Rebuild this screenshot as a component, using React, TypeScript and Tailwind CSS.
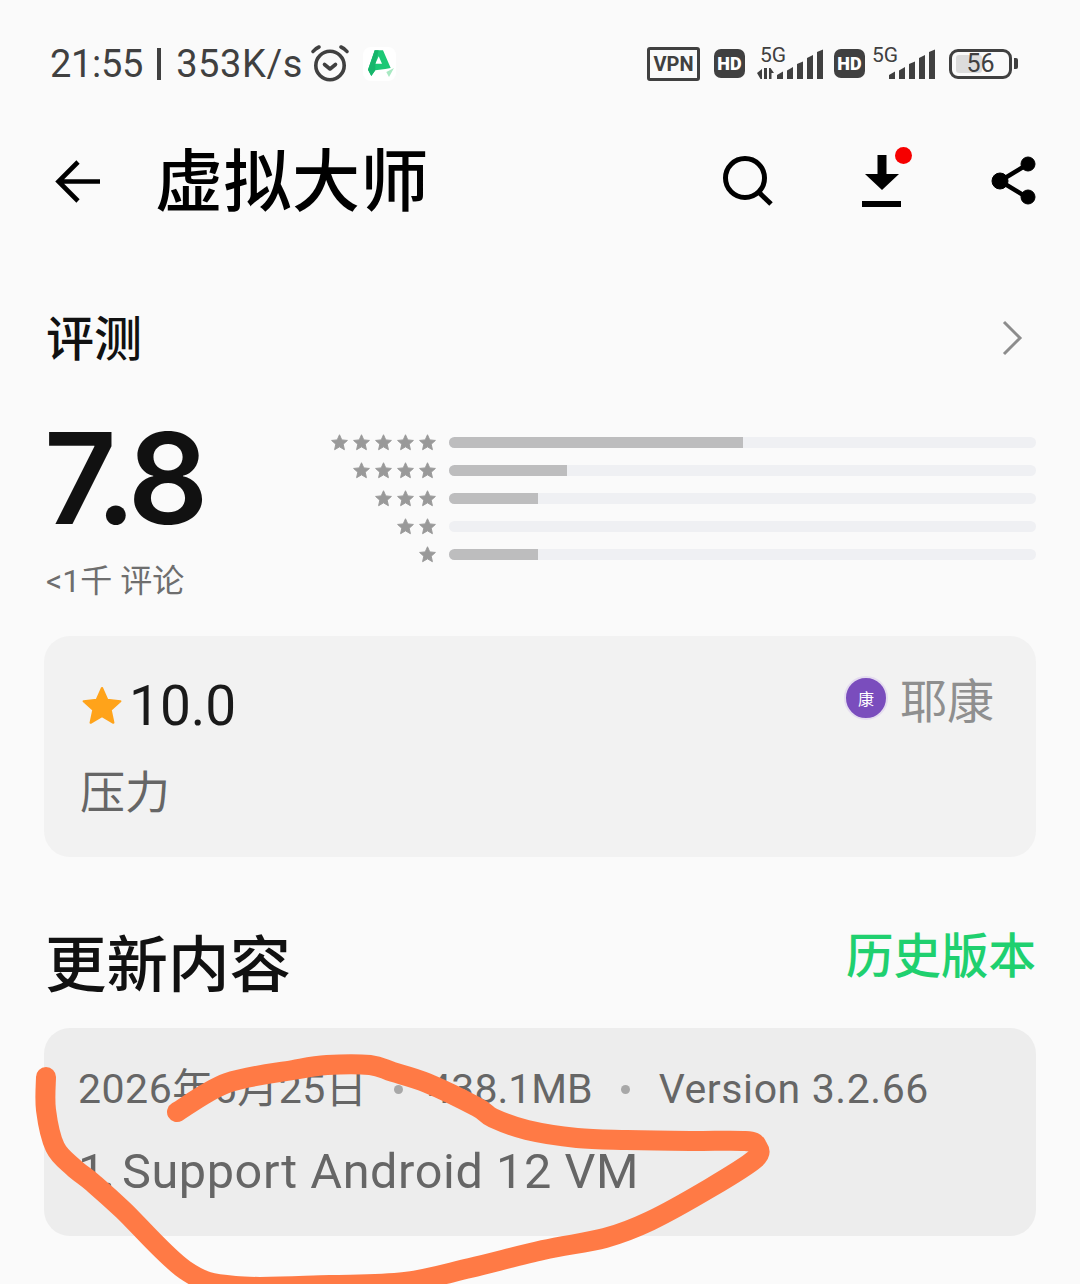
import React from 'react';

const CJK = '"Noto Sans CJK SC", sans-serif';
const LATIN_CJK = 'Roboto, "Noto Sans CJK SC", sans-serif';

const bars = [
  { stars: 5, fill: 294 },
  { stars: 4, fill: 118 },
  { stars: 3, fill: 89 },
  { stars: 2, fill: 0 },
  { stars: 1, fill: 89 },
];

// centre line of the hand-drawn stroke
const scribblePoints = [
  [177, 1112], [227, 1083], [293, 1070], [327, 1065], [370, 1065], [393, 1072], [427, 1083], [477, 1107],
  [493, 1118], [527, 1130], [577, 1138], [627, 1140], [690, 1141], [745, 1141], [757, 1146], [755, 1159], [710, 1188],
  [650, 1221], [605, 1238], [543, 1250], [470, 1268], [405, 1282], [330, 1285], [235, 1286], [185, 1270],
  [123, 1210], [93, 1183], [73, 1167], [55, 1147], [46, 1110], [46, 1077],
];

const smoothPath = (pts: number[][]) => {
  let d = `M${pts[0][0]} ${pts[0][1]}`;
  for (let i = 0; i < pts.length - 1; i++) {
    const p0 = pts[Math.max(i - 1, 0)];
    const p1 = pts[i];
    const p2 = pts[i + 1];
    const p3 = pts[Math.min(i + 2, pts.length - 1)];
    const c1x = p1[0] + (p2[0] - p0[0]) / 6;
    const c1y = p1[1] + (p2[1] - p0[1]) / 6;
    const c2x = p2[0] - (p3[0] - p1[0]) / 6;
    const c2y = p2[1] - (p3[1] - p1[1]) / 6;
    d += `C${c1x} ${c1y} ${c2x} ${c2y} ${p2[0]} ${p2[1]}`;
  }
  return d;
};

const Star: React.FC<{ size: number; color: string }> = ({ size, color }) => (
  <svg width={size} height={size} viewBox="0 0 24 24" className="shrink-0">
    <path
      fill={color}
      stroke={color}
      strokeWidth="1.2"
      strokeLinejoin="round"
      d="M12 2.2l2.9 6.5 7.1.7-5.3 4.7 1.5 7-6.2-3.6-6.2 3.6 1.5-7L2 9.4l7.1-.7z"
    />
  </svg>
);

const AlarmIcon = () => (
  <svg width="40" height="40" viewBox="0 0 40 40" fill="none" stroke="#404040" strokeWidth="3.6" strokeLinecap="round" strokeLinejoin="round">
    <circle cx="20" cy="21.5" r="14.2" />
    <path d="M14.5 20.5l5.5 4.5 5.5-4.5" />
    <path d="M3 7.5c1.5-2 3.5-3.5 6-4.5M37 7.5c-1.5-2-3.5-3.5-6-4.5" />
  </svg>
);

const ApkIcon = () => (
  <div className="ml-[13px] h-[34px] w-[33px] rounded-[8px] bg-white">
    <svg width="33" height="34" viewBox="0 0 33 34">
      <path fillRule="evenodd" d="M11.7 3.3H20L27.7 21l-5.4 1-10 1.3L8.3 29 5 22.7zM15.7 9.3L19 16.7h-6.7z" fill="#1cc875" />
      <path d="M11.7 3.3h4l-3.4 13.4 0 6.6-4 5.7L5 22.7z" fill="#17b56b" />
      <path d="M23.3 25l7.7-4-5 9z" fill="#a8e8c2" />
    </svg>
  </div>
);

const HdBadge = () => (
  <span className="flex h-[29px] w-[31px] items-center justify-center rounded-[7px] bg-[#404040] text-[18px] leading-none font-black text-white [font-family:Roboto,sans-serif]">
    HD
  </span>
);

const Signal: React.FC<{ arrows?: boolean }> = ({ arrows }) => (
  <div className="relative mt-[-1px] h-[32px] w-[67px]">
    <span className="absolute top-[-4px] left-[4px] text-[21px] leading-[24px] text-[#404040] [font-family:Roboto,sans-serif]">5G</span>
    <svg width="67" height="32" viewBox="0 0 67 32" fill="#404040" className="absolute top-0 left-0">
      {arrows && <path d="M1 26l5-4v10H4.5zM8 21h3v11H8zM13 21h1.5l3.5 5h-2.5v6H13z" />}
      <path d="M21 28l6-3.5V32h-6z" />
      <path d="M31 23.5l6-3.5v12h-6z" />
      <path d="M41 17l6-2.5V32h-6z" />
      <path d="M51 11l6-3v24h-6z" />
      <path d="M61 5l6-2.5V32h-6z" />
    </svg>
  </div>
);

const StatusBar = () => (
  <div className="flex h-[128px] items-center justify-between pr-[62px] pb-[1px] pl-[50px]">
    <div className="flex items-center text-[#404040] [font-family:Roboto,sans-serif]">
      <span className="text-[38px] leading-none tracking-[-0.3px]">21:55</span>
      <span className="ml-[14px] h-[32px] w-[4px] bg-[#404040]" />
      <span className="ml-[15px] text-[38px] leading-none tracking-[0.6px]">353K/s</span>
      <div className="ml-[7px]">
        <AlarmIcon />
      </div>
      <ApkIcon />
    </div>
    <div className="flex items-center">
      <span className="flex h-[34px] w-[53px] items-center justify-center rounded-[3px] border-[3.5px] border-[#404040] text-[20px] leading-none font-bold text-[#404040] [font-family:Roboto,sans-serif]">
        VPN
      </span>
      <div className="ml-[14px]"><HdBadge /></div>
      <div className="ml-[11px]"><Signal arrows /></div>
      <div className="ml-[11px]"><HdBadge /></div>
      <div className="ml-[3px]"><Signal /></div>
      <div className="relative ml-[14px] flex h-[30px] w-[63px] items-center justify-center rounded-[9px] border-[3px] border-[#404040]">
        <div className="absolute top-[3px] bottom-[3px] left-[4px] w-[26px] rounded-[3px] bg-[#dcdcdc]" />
        <span className="relative text-[25px] leading-none text-[#404040] [font-family:Roboto,sans-serif]">56</span>
      </div>
      <div className="ml-[2px] h-[11px] w-[4px] rounded-r-[2px] bg-[#404040]" />
    </div>
  </div>
);

const Header = () => (
  <div className="flex h-[106px] items-center pr-[41px] pl-[55px]">
    <svg width="46" height="46" viewBox="0 0 46 46" fill="none" stroke="#000" strokeWidth="4.6">
      <path d="M45 23.5H4M23 4L3.5 23.5 23 43" />
    </svg>
    <h1 className="mt-[-8px] ml-[54px] text-[68px] leading-none font-medium tracking-[0.5px] text-black" style={{ fontFamily: CJK }}>虚拟大师</h1>
    <div className="ml-auto flex items-center">
      <svg width="52" height="52" viewBox="0 0 52 52" fill="none" stroke="#000" strokeWidth="5">
        <circle cx="23" cy="23" r="19.5" />
        <path d="M36.5 37L49 49" />
      </svg>
      <div className="relative ml-[88px] h-[52px] w-[40px]">
        <svg width="40" height="52" viewBox="0 0 40 52" fill="#000">
          <path d="M15.5 0h9v19H37L20 35 3 19h12.5z" />
          <rect y="46" width="39" height="6" />
        </svg>
        <span className="absolute top-[-8px] left-[33px] h-[17px] w-[17px] rounded-full bg-[#f60000]" />
      </div>
      <svg width="48" height="52" viewBox="0 0 48 52" className="ml-[89px]" fill="#000" stroke="#000">
        <path d="M37 9L9 26l28 17" fill="none" strokeWidth="4.5" />
        <circle cx="37" cy="9" r="7" />
        <circle cx="9" cy="26" r="8" />
        <circle cx="37" cy="42" r="7" />
      </svg>
    </div>
  </div>
);

const Reviews = () => (
  <section className="px-[44px]">
    <div className="mt-[74px] flex h-[60px] items-center justify-between">
      <h2 className="mt-[-6px] ml-[2px] text-[48px] leading-none font-medium text-[#111]" style={{ fontFamily: CJK }}>评测</h2>
      <svg width="22" height="36" viewBox="0 0 22 36" fill="none" stroke="#8c8c8c" strokeWidth="3" className="mr-[13px]">
        <path d="M3 2l16 16L3 34" />
      </svg>
    </div>
    <div className="mt-[32px] flex h-[205px] items-start">
      <div className="w-[287px]">
        <div className="mt-[30px] text-[126px] leading-[96px] font-semibold tracking-[-5px] text-[#111] [font-family:Inter,sans-serif]">7.8</div>
        <div className="mt-[39px] ml-[2px] flex items-center text-[32px] leading-none whitespace-pre text-[#6e6e6e]" style={{ fontFamily: LATIN_CJK }}>&lt;1千 评论</div>
      </div>
      <div className="mt-[36px] flex flex-1 flex-col gap-[16px]">
        {bars.map((bar) => (
          <div key={bar.stars} className="flex h-[12px] items-center">
            <div className="flex w-[106px] justify-end gap-[3px]">
              {Array.from({ length: bar.stars }, (_, i) => (
                <Star key={i} size={19} color="#999999" />
              ))}
            </div>
            <div className="ml-[12px] h-[11px] flex-1 overflow-hidden rounded-full bg-[#eff0f3]">
              <div className="h-full bg-[#bdbdbe]" style={{ width: bar.fill }} />
            </div>
          </div>
        ))}
      </div>
    </div>
    <div className="mt-[31px] h-[221px] rounded-[26px] bg-[#f2f2f2] pt-[36px] pr-[42px] pl-[36px]">
      <div className="flex items-start justify-between">
        <div className="flex items-center">
          <Star size={44} color="#ffa31a" />
          <span className="ml-[5px] text-[55px] leading-[68px] text-[#1a1a1a] [font-family:Roboto,sans-serif]">10.0</span>
        </div>
        <div className="mt-[2px] flex items-center">
          <span className="flex h-[44px] w-[44px] items-center justify-center rounded-full border-[2px] border-[#e4dcef] bg-[#7a4dbd] text-[16px] leading-none text-white" style={{ fontFamily: CJK }}>康</span>
          <span className="ml-[12px] text-[47px] leading-none text-[#8f8f8f]" style={{ fontFamily: CJK }}>耶康</span>
        </div>
      </div>
      <p className="mt-[22px] text-[45px] leading-[56px] text-[#666]" style={{ fontFamily: CJK }}>压力</p>
    </div>
  </section>
);

const UpdateNotes = () => (
  <section className="px-[44px]">
    <div className="mt-[72px] flex h-[70px] items-start justify-between">
      <h2 className="mt-[-3px] ml-[1px] text-[61.5px] leading-[70px] font-medium text-[#111]" style={{ fontFamily: CJK }}>更新内容</h2>
      <span className="mt-[-4px] text-[47.5px] leading-[56px] font-medium text-[#1fd06f]" style={{ fontFamily: CJK }}>历史版本</span>
    </div>
    <div className="mt-[29px] h-[208px] rounded-[26px] bg-[#ededed] pt-[36px] pl-[34px] text-[#666]">
      <div className="flex items-center text-[41px] leading-[50px] whitespace-pre" style={{ fontFamily: LATIN_CJK }}>
        <span className="tracking-[0.5px]">2026年6月25日</span>
        <span className="ml-[27px] h-[9px] w-[9px] rounded-full bg-[#a8a8a8]" />
        <span className="ml-[25px]">438.1MB</span>
        <span className="ml-[28px] h-[9px] w-[9px] rounded-full bg-[#a8a8a8]" />
        <span className="ml-[29px] tracking-[0.6px]">Version 3.2.66</span>
      </div>
      <div className="mt-[30px] flex text-[48.6px] leading-[56px] tracking-[0.6px] whitespace-pre" style={{ fontFamily: LATIN_CJK }}>
        <span className="w-[44px] tracking-[-3px]">1.</span>
        <span>Support Android 12 VM</span>
      </div>
    </div>
  </section>
);

// hand-drawn scribble on top of the screenshot
const Scribble = () => (
  <svg width="1080" height="1284" viewBox="0 0 1080 1284" fill="none" className="pointer-events-none absolute top-0 left-0">
    <path d={smoothPath(scribblePoints)} stroke="#ff7a45" strokeWidth="20" strokeLinecap="round" strokeLinejoin="round" />
  </svg>
);

export default function App() {
  return (
    <div className="relative h-[1284px] w-[1080px] overflow-hidden bg-[#fafafa]">
      <StatusBar />
      <Header />
      <Reviews />
      <UpdateNotes />
      <Scribble />
    </div>
  );
}
